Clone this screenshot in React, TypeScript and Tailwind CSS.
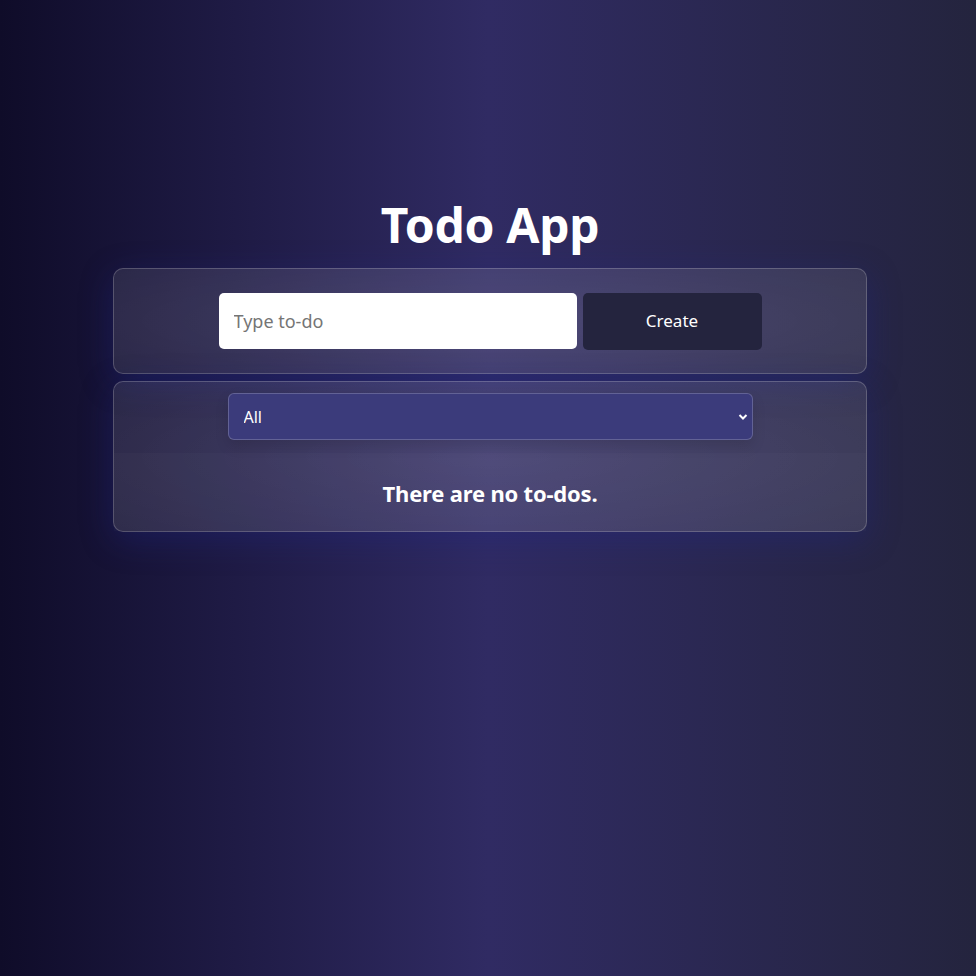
import { useState } from 'react';

const font = { fontFamily: '"Noto Sans", "Open Sans", sans-serif' };

export default function App() {
  const [text, setText] = useState('');
  const [filter, setFilter] = useState('all');

  return (
    <div
      className="min-h-[976px] w-full bg-[linear-gradient(to_right,#0f0c29,#302b63,#24243e)] pt-[196px] text-white"
      style={font}
    >
      <div className="pl-[4px]">
        <h1 className="text-center text-[48px] font-bold leading-[58px] tracking-[-0.3px]">Todo App</h1>

        <div className="mx-auto mt-[14px] w-[754px]">
          {/* Create form */}
          <div className="flex h-[106px] items-center justify-center gap-[6px] rounded-[10px] border border-white/20 bg-[radial-gradient(ellipse_at_center,rgba(255,255,255,0.14),rgba(255,255,255,0.09))] shadow-[0_8px_32px_0_rgba(31,38,135,0.37)]">
            <input
              value={text}
              onChange={(e) => setText(e.target.value)}
              placeholder="Type to-do"
              className="h-[56px] w-[358px] rounded-[5px] bg-white px-[15px] text-[18px] text-gray-900 outline-none placeholder:text-[#757575]"
            />
            <button className="h-[57px] w-[179px] rounded-[5px] bg-[#24243e] text-[17px] text-white">
              Create
            </button>
          </div>

          {/* List */}
          <div className="mt-[7px] h-[151px] rounded-[10px] border border-white/20 bg-[radial-gradient(ellipse_at_center,rgba(255,255,255,0.14),rgba(255,255,255,0.09))] pt-[11px] shadow-[0_8px_32px_0_rgba(31,38,135,0.37)]">
            <div className="relative mx-auto w-[525px]">
              <select
                value={filter}
                onChange={(e) => setFilter(e.target.value)}
                className="h-[47px] w-full appearance-none rounded-[6px] border border-white/20 bg-[#3b3b7b] px-[15px] text-[16px] text-white shadow-[0_6px_14px_rgba(0,0,0,0.12)] outline-none"
              >
                <option value="all">All</option>
                <option value="done">Completed</option>
                <option value="todo">Incomplete</option>
              </select>
              <svg
                className="pointer-events-none absolute right-[5px] top-[20px]"
                width="10"
                height="8"
                viewBox="0 0 10 8"
                fill="none"
                stroke="white"
                strokeWidth="2"
              >
                <path d="M1.5 2l3.5 3.5L8.5 2" />
              </svg>
            </div>
            <div className="mt-[13px] flex h-[78px] items-center justify-center bg-white/[0.02] pt-[2px]">
              <p className="text-[22px] font-bold tracking-[-0.2px]">There are no to-dos.</p>
            </div>
          </div>
        </div>
      </div>
    </div>
  );
}
